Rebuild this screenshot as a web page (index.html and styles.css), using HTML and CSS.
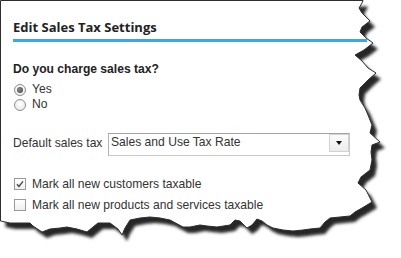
FILE: index.html
```html
<!DOCTYPE html>
<html>
<head>
<meta charset="utf-8">
<link rel="stylesheet" href="styles.css">
</head>
<body>
<svg class="paper" width="401" height="258" viewBox="0 0 401 258" aria-hidden="true">
  <defs>
    <filter id="blur" x="-10%" y="-10%" width="130%" height="130%">
      <feGaussianBlur stdDeviation="1.8"/>
    </filter>
    <polygon id="sheet" points="0.5,0.5 363,0.5 362,3 359,8 362,13 370,21 362,27 360,32 366,38 373,43 364,50 355,55 362,61 368,68 376,73 368,80 360,88 359,95 360,100 365,108 368,115 372,125 370,133 380,142 372,145 371,152 372,160 370,170 361,177 358,183 366,190 370,198 372,202 362,208 355,212 350,216 340,217 330,218 325,222 320,228 310,229 303,230 293,231 283,230 273,228 267,225 262,221 257,219 252,225 247,228 240,221 235,220 230,225 217,227 207,226 200,225 190,227 183,227 170,220 160,218 150,217 140,218 130,220 125,228 122,235 118,229 110,223 98,223 93,227 87,232 77,229 67,227 60,228 50,229 42,232 33,226 30,223 20,223 10,223 0.5,221"/>
  </defs>
  <use href="#sheet" fill="#262626" transform="translate(5,6)" filter="url(#blur)"/>
  <use href="#sheet" fill="#ffffff" stroke="#2e2e2e" stroke-width="1"/>
</svg>
<main class="panel">
  <h1 class="title">Edit Sales Tax Settings</h1>
  <p class="question">Do you charge sales tax?</p>
  <div class="options">
    <label class="option"><span class="radio is-on"></span>Yes</label>
    <label class="option"><span class="radio"></span>No</label>
  </div>
  <div class="field">
    <span class="field-label">Default sales tax</span>
    <div class="select">
      <span class="select-value">Sales and Use Tax Rate</span>
      <span class="select-btn"><span class="caret"></span></span>
    </div>
  </div>
  <div class="checks">
    <label class="check"><span class="box"><svg width="8" height="8" viewBox="0 0 8 8"><path d="M1 4.2 L3 6.4 L7 1.4" fill="none" stroke="#444" stroke-width="1.4"/></svg></span>Mark all new customers taxable</label>
    <label class="check"><span class="box"></span>Mark all new products and services taxable</label>
  </div>
</main>
</body>
</html>
```

FILE: styles.css
```css
html, body {
  margin: 0;
}
body {
  width: 401px;
  height: 258px;
  position: relative;
  overflow: hidden;
  background: #fff;
  font-family: "Liberation Sans", Arial, sans-serif;
  font-size: 12.1px;
  color: #333;
}
.paper {
  position: absolute;
  left: 0;
  top: 0;
}
.panel {
  position: relative;
  padding: 19px 0 0 13px;
}
.title {
  margin: 0;
  width: 354px;
  font: bold 13px/16px "Open Sans", sans-serif;
  color: #222;
  padding-bottom: 4px;
  border-bottom: 3px solid #3aa7e8;
}
.question {
  margin: 20px 0 0;
  font-weight: bold;
  line-height: 14px;
  color: #222;
}
.options {
  margin-top: 6px;
  display: flex;
  flex-direction: column;
}
.option {
  display: flex;
  align-items: center;
  height: 15px;
  line-height: 15px;
}
.radio {
  width: 12px;
  height: 12px;
  box-sizing: border-box;
  border: 1px solid #8e8e8e;
  border-radius: 50%;
  margin: 0 6px 0 1px;
  background: radial-gradient(circle at 50% 40%, #fff, #e6e6e6);
  display: flex;
  align-items: center;
  justify-content: center;
}
.radio.is-on::after {
  content: "";
  width: 6px;
  height: 6px;
  border-radius: 50%;
  background: radial-gradient(circle at 40% 40%, #8a8a8a, #3e3e3e);
}
.field {
  margin-top: 21px;
  display: flex;
  align-items: flex-start;
}
.field-label {
  width: 95px;
  padding-top: 3px;
  line-height: 14px;
}
.select {
  width: 242px;
  height: 23px;
  box-sizing: border-box;
  border: 1px solid #c9c9c9;
  border-top-color: #a3a3a3;
  border-left-color: #b0b0b0;
  display: flex;
  align-items: flex-start;
}
.select-value {
  padding: 1px 0 0 2px;
  line-height: 14px;
}
.select-btn {
  margin-left: auto;
  width: 20px;
  height: 18px;
  box-sizing: border-box;
  border: 1px solid #d2d2d2;
  background: linear-gradient(#fbfbfb, #ececec);
  display: flex;
  align-items: center;
  justify-content: center;
}
.caret {
  width: 0;
  height: 0;
  border-left: 3px solid transparent;
  border-right: 3px solid transparent;
  border-top: 4px solid #111;
}
.checks {
  margin-top: 20px;
}
.check {
  display: flex;
  align-items: center;
  height: 16px;
  line-height: 16px;
}
.check + .check {
  margin-top: 5px;
}
.box {
  width: 12px;
  height: 12px;
  box-sizing: border-box;
  border: 1px solid #9a9a9a;
  margin: 0 6px 0 1px;
  background: linear-gradient(#fff, #efefef);
  display: flex;
  align-items: center;
  justify-content: center;
}
```
